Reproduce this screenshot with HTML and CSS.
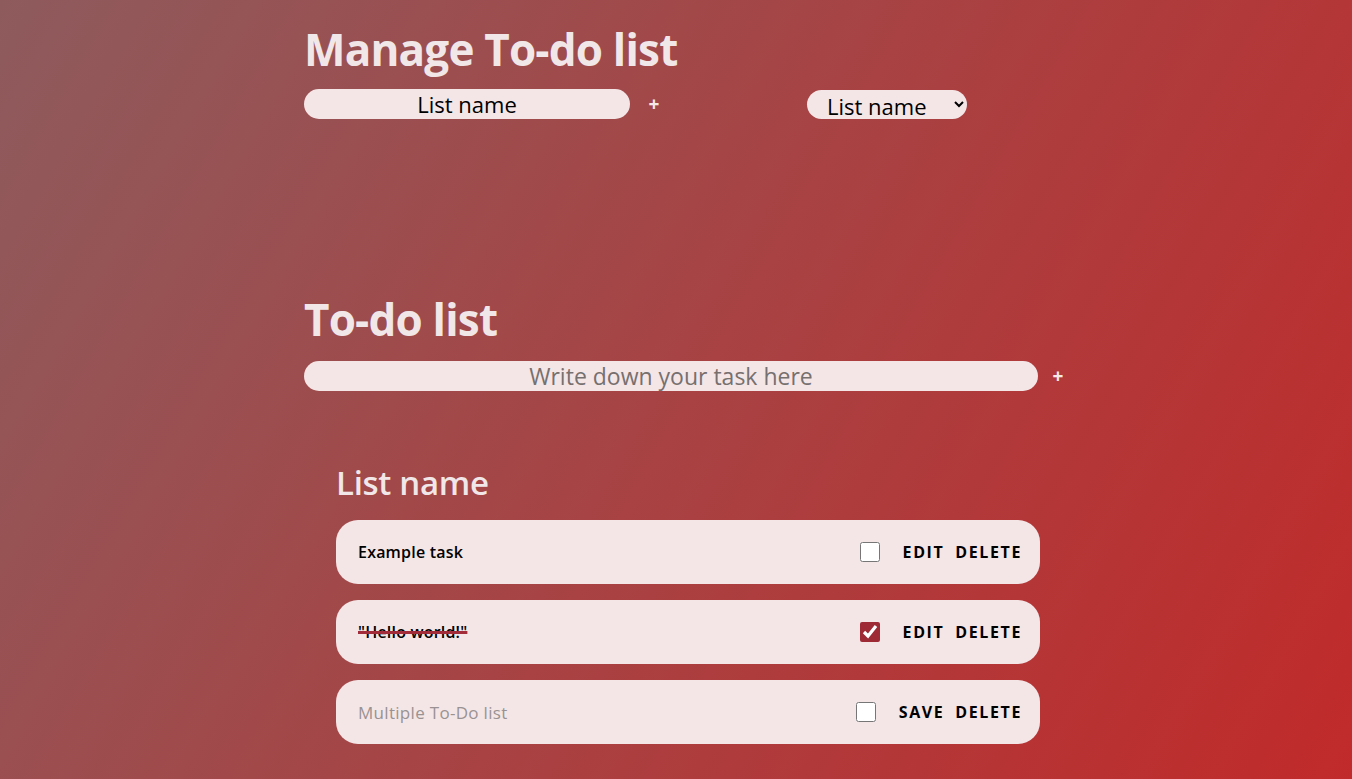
FILE: index.html
```html
<!DOCTYPE html>
<html lang="en">
<head>
<meta charset="utf-8">
<title>To-do list</title>
<link rel="stylesheet" href="styles.css">
</head>
<body>
<main class="app">
  <section class="manage">
    <h1 class="title">Manage To-do list</h1>
    <div class="manage-row">
      <input class="pill name-input" type="text" value="List name">
      <button class="plus" type="button">+</button>
      <select class="pill list-select">
        <option>List name</option>
      </select>
    </div>
  </section>

  <section class="todo">
    <h1 class="title">To-do list</h1>
    <div class="task-row">
      <input class="pill task-input" type="text" placeholder="Write down your task here">
      <button class="plus" type="button">+</button>
    </div>

    <div class="list">
      <h2 class="list-title">List name</h2>
      <ul class="tasks">
        <li class="task">
          <span class="task-text">Example task</span>
          <div class="task-actions">
            <input class="check" type="checkbox">
            <button class="act" type="button">Edit</button>
            <button class="act" type="button">Delete</button>
          </div>
        </li>
        <li class="task">
          <span class="task-text done">"Hello world!"</span>
          <div class="task-actions">
            <input class="check" type="checkbox" checked>
            <button class="act" type="button">Edit</button>
            <button class="act" type="button">Delete</button>
          </div>
        </li>
        <li class="task">
          <input class="task-edit" type="text" placeholder="Multiple To-Do list">
          <div class="task-actions">
            <input class="check" type="checkbox">
            <button class="act" type="button">Save</button>
            <button class="act" type="button">Delete</button>
          </div>
        </li>
      </ul>
    </div>
  </section>
</main>
</body>
</html>
```

FILE: styles.css
```css
* {
  box-sizing: border-box;
}

html, body {
  margin: 0;
  min-height: 100%;
}

body {
  min-height: 100vh;
  background: linear-gradient(120deg, #8e5b5d 0%, #c12a2a 100%);
  font-family: "Open Sans", "Noto Sans", sans-serif;
  color: #000;
}

.app {
  padding: 21px 0 40px 304px;
}

.title {
  margin: 0;
  font-size: 44px;
  line-height: 56px;
  font-weight: 700;
  color: #f1e7e8;
  letter-spacing: -0.8px;
}

.manage-row,
.task-row {
  display: flex;
  align-items: center;
  margin-top: 12px;
}

.pill {
  height: 30px;
  border: none;
  border-radius: 15px;
  background: #f4e6e7;
  font-family: inherit;
  font-size: 22px;
  color: #000;
  outline: none;
}

.name-input {
  width: 326px;
  text-align: center;
  padding: 0 12px 1px;
}

.plus {
  border: none;
  background: transparent;
  color: #f4eaea;
  font-family: inherit;
  font-weight: 700;
  font-size: 19px;
  line-height: 1;
  padding: 0;
  width: 20px;
  margin-left: 14px;
  cursor: pointer;
}

.list-select {
  margin-left: 143px;
  width: 160px;
  height: 29px;
  padding: 0 6px 4px 16px;
  line-height: 24px;
}

.todo {
  margin-top: 172px;
}

.task-row {
  margin-top: 14px;
}

.task-row .plus {
  margin-left: 10px;
}

.task-input {
  width: 734px;
  text-align: center;
  padding: 0 12px;
  font-size: 23px;
}

.task-input::placeholder {
  color: #76706f;
}

.list {
  margin: 72px 0 0 32px;
  width: 704px;
}

.list-title {
  margin: 0;
  font-size: 33px;
  line-height: 40px;
  font-weight: 600;
  color: #f1e7e8;
  letter-spacing: -0.3px;
}

.tasks {
  list-style: none;
  margin: 17px 0 0;
  padding: 0;
  display: flex;
  flex-direction: column;
  gap: 16px;
}

.task {
  height: 64px;
  border-radius: 22px;
  background: #f4e6e7;
  display: flex;
  align-items: center;
  justify-content: space-between;
  padding: 0 18px 0 22px;
}

.task-text {
  font-size: 16px;
  font-weight: 600;
  letter-spacing: 0.2px;
}

.task-text.done {
  text-decoration: line-through;
  text-decoration-color: #a22c3a;
  text-decoration-thickness: 3px;
}

.task-edit {
  border: none;
  background: transparent;
  font-family: inherit;
  font-size: 17px;
  padding: 0;
  outline: none;
  width: 300px;
  letter-spacing: 0.3px;
}

.task-edit::placeholder {
  color: #9a9292;
}

.task-actions {
  display: flex;
  align-items: center;
}

.check {
  width: 20px;
  height: 20px;
  margin: 0 23px 0 0;
  accent-color: #9e2a36;
}

.act {
  border: none;
  background: transparent;
  font-family: inherit;
  font-size: 16px;
  font-weight: 700;
  text-transform: uppercase;
  letter-spacing: 1.6px;
  padding: 0;
  color: #000;
  cursor: pointer;
}

.act + .act {
  margin-left: 11px;
}
```
